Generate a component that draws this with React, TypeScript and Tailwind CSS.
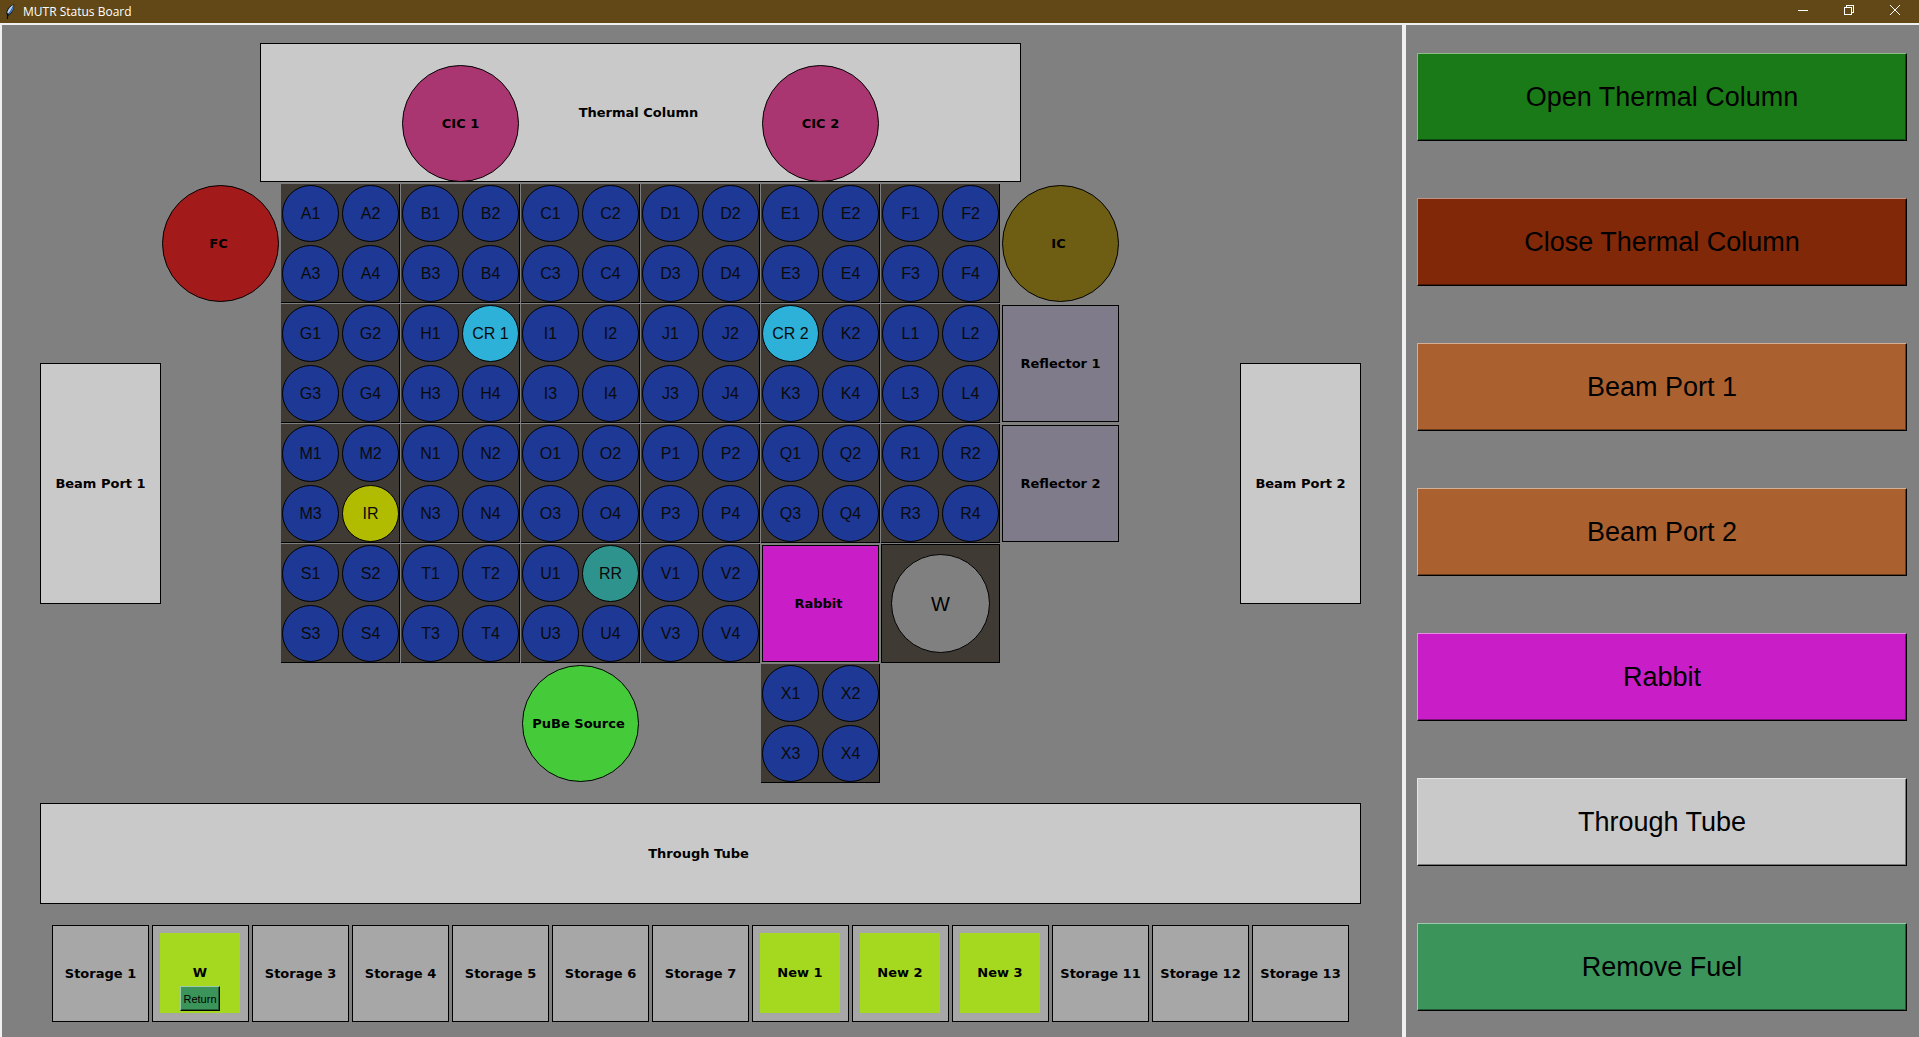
import React from "react";

const SPECIAL: Record<string, { label: string; color: string }> = {
  H2: { label: "CR 1", color: "bg-[#2db1d9]" },
  K1: { label: "CR 2", color: "bg-[#2db1d9]" },
  M4: { label: "IR", color: "bg-[#b1bc00]" },
  U2: { label: "RR", color: "bg-[#2e938c]" },
};

const BUNDLES = "ABCDEFGHIJKLMNOPQRSTUV".split("");

const ACTIONS = [
  { label: "Open Thermal Column", color: "bg-[#1a7a17]" },
  { label: "Close Thermal Column", color: "bg-[#812809]" },
  { label: "Beam Port 1", color: "bg-[#aa612f]" },
  { label: "Beam Port 2", color: "bg-[#aa612f]" },
  { label: "Rabbit", color: "bg-[#c91dc7]" },
  { label: "Through Tube", color: "bg-[#c9c9c9]" },
  { label: "Remove Fuel", color: "bg-[#3b955a]" },
];

const STORAGE: { label: string; fuel?: boolean; returnable?: boolean }[] = [
  { label: "Storage 1" },
  { label: "W", fuel: true, returnable: true },
  { label: "Storage 3" },
  { label: "Storage 4" },
  { label: "Storage 5" },
  { label: "Storage 6" },
  { label: "Storage 7" },
  { label: "New 1", fuel: true },
  { label: "New 2", fuel: true },
  { label: "New 3", fuel: true },
  { label: "Storage 11" },
  { label: "Storage 12" },
  { label: "Storage 13" },
];

const RAISED =
  "border border-t-white/50 border-l-white/50 border-r-black border-b-black shadow-[inset_-1px_-1px_0_rgba(0,0,0,0.4)]";

const BOLD = "font-['DejaVu_Sans',sans-serif] text-[13px] leading-4 font-bold whitespace-nowrap";

function Feather() {
  return (
    <svg width="16" height="16" viewBox="0 0 16 16" aria-hidden="true">
      <path d="M12.2 0C8.6 1 5 4.2 4.2 9L5.4 12.4L8.2 10.6C11 7.6 12.6 3.4 12.2 0Z" fill="#111820" />
      <path d="M11.6 0.8C8.8 2 6 5 5.2 8.8L6 10C8 8 9.6 5 11.6 0.8Z" fill="#b4d4f7" />
      <path d="M11.6 1.4C11.8 4.8 10 8 7 10.4L6 10.4C8.2 8 10 4.8 11.6 1.4Z" fill="#4a86d8" />
      <path d="M5.8 9.2L5.4 15" stroke="#0c0c0c" strokeWidth="1.2" />
    </svg>
  );
}

function TitleBar() {
  const control = "flex h-full w-[46px] items-center justify-center pb-[3px] text-white";
  return (
    <header className="flex h-[23px] items-center bg-[#624816] pr-px text-white">
      <div className="flex flex-1 items-center gap-[5px] pl-[2px]">
        <Feather />
        <h1 className="font-['Open_Sans',sans-serif] text-[12px] leading-4">MUTR Status Board</h1>
      </div>
      <button aria-label="Minimize" className={control}>
        <svg width="10" height="10" viewBox="0 0 10 10" shapeRendering="crispEdges">
          <path d="M0 5.5H10" stroke="currentColor" />
        </svg>
      </button>
      <button aria-label="Restore" className={control}>
        <svg width="10" height="10" viewBox="0 0 10 10" fill="none" stroke="currentColor" shapeRendering="crispEdges">
          <rect x="0.5" y="2.5" width="7" height="7" />
          <path d="M2.5 2V0.5H9.5V7.5H8" />
        </svg>
      </button>
      <button aria-label="Close" className={control}>
        <svg width="10" height="10" viewBox="0 0 10 10" stroke="currentColor">
          <path d="M0 0L10 10M10 0L0 10" />
        </svg>
      </button>
    </header>
  );
}

function Instrument({ label, className }: { label: string; className: string }) {
  return (
    <div
      className={`flex size-[117px] items-center justify-center rounded-full border border-black ${BOLD} ${className}`}
    >
      {label}
    </div>
  );
}

function Block({ label, className }: { label: string; className: string }) {
  return <div className={`flex items-center justify-center border border-black ${BOLD} ${className}`}>{label}</div>;
}

function Bundle({ name, className = "" }: { name: string; className?: string }) {
  return (
    <div
      className={`grid size-[119px] grid-cols-2 gap-[3px] border-r border-b border-black bg-[#3f3a33] pt-px pl-px ${className}`}
    >
      {[1, 2, 3, 4].map((n) => {
        const special = SPECIAL[`${name}${n}`];
        return (
          <div
            key={n}
            className={`flex size-[57px] items-center justify-center rounded-full border border-black text-base text-[#0b0b0b] ${
              special ? special.color : "bg-[#1e3896]"
            }`}
          >
            {special ? special.label : `${name}${n}`}
          </div>
        );
      })}
    </div>
  );
}

function Core() {
  return (
    <div className="grid grid-cols-[repeat(6,119px)] gap-px">
      {BUNDLES.map((name) => (
        <Bundle key={name} name={name} />
      ))}
      <div className="p-px">
        <Block label="Rabbit" className="size-[117px] bg-[#c91dc7] pr-1" />
      </div>
      <div className="flex size-[119px] items-center justify-center border border-black bg-[#3f3a33]">
        <div className="flex size-[99px] items-center justify-center rounded-full border border-black bg-[#808080] text-xl">
          W
        </div>
      </div>
      <div className="col-start-3 p-px">
        <Instrument label="PuBe Source" className="bg-[#45cb3a] pr-1" />
      </div>
      <Bundle name="X" className="col-start-5" />
    </div>
  );
}

function Storage() {
  return (
    <div className="mx-3 mt-[21px] grid grid-cols-13 gap-[3px]">
      {STORAGE.map((slot) => (
        <div
          key={slot.label}
          className={`flex h-[97px] items-center justify-center border border-black bg-[#a7a7a7] ${BOLD}`}
        >
          {slot.fuel ? (
            <div className="relative mr-px mb-px flex size-20 items-center justify-center bg-[#a4d91f]">
              {slot.label}
              {slot.returnable && (
                <button
                  className={`absolute bottom-[2px] left-5 flex h-[25px] w-10 items-center justify-center bg-[#3b955a] font-['Liberation_Sans',Arial,sans-serif] text-[11px] font-normal ${RAISED}`}
                >
                  Return
                </button>
              )}
            </div>
          ) : (
            slot.label
          )}
        </div>
      ))}
    </div>
  );
}

function Board() {
  return (
    <main className="flex-1 bg-[#808080] pt-[18px] pr-[41px] pb-3 pl-[38px]">
      <div className="grid grid-cols-[auto_auto_1fr] gap-x-px gap-y-[2px]">
        <div className="col-start-2 flex h-[139px] w-[761px] items-end justify-between justify-self-center border border-black bg-[#c9c9c9] px-[141px]">
          <div className="-mb-px">
            <Instrument label="CIC 1" className="bg-[#aa3671]" />
          </div>
          <span className={`self-center pr-1 ${BOLD}`}>Thermal Column</span>
          <div className="-mb-px">
            <Instrument label="CIC 2" className="bg-[#aa3671]" />
          </div>
        </div>

        <Block label="Beam Port 1" className="col-start-1 h-[241px] w-[121px] self-center bg-[#c9c9c9]" />
        <div className="flex gap-[2px]">
          <div className="pt-px">
            <Instrument label="FC" className="bg-[#a31a1b] pr-1" />
          </div>
          <Core />
          <div className="flex flex-col gap-[3px] pt-px">
            <Instrument label="IC" className="bg-[#6e5e13] pr-1" />
            <Block label="Reflector 1" className="size-[117px] bg-[#807b8a]" />
            <Block label="Reflector 2" className="size-[117px] bg-[#807b8a]" />
          </div>
        </div>
        <Block label="Beam Port 2" className="h-[241px] w-[121px] self-center justify-self-end bg-[#c9c9c9]" />
      </div>

      <Block label="Through Tube" className="mt-5 h-[101px] bg-[#c9c9c9] pr-1" />
      <Storage />
    </main>
  );
}

function Actions() {
  return (
    <aside className="flex w-[513px] shrink-0 flex-col gap-[57px] bg-[#808080] pt-7 pr-3 pb-5 pl-[11px]">
      {ACTIONS.map((action) => (
        <button key={action.label} className={`h-[88px] w-full text-[27px] leading-8 ${RAISED} ${action.color}`}>
          {action.label}
        </button>
      ))}
    </aside>
  );
}

export default function App() {
  return (
    <div className="flex min-h-screen flex-col bg-[#f0f0f0] font-['Liberation_Sans',Arial,sans-serif] text-black">
      <TitleBar />
      <div className="flex flex-1 gap-1 pt-[2px] pl-[2px]">
        <Board />
        <Actions />
      </div>
    </div>
  );
}
